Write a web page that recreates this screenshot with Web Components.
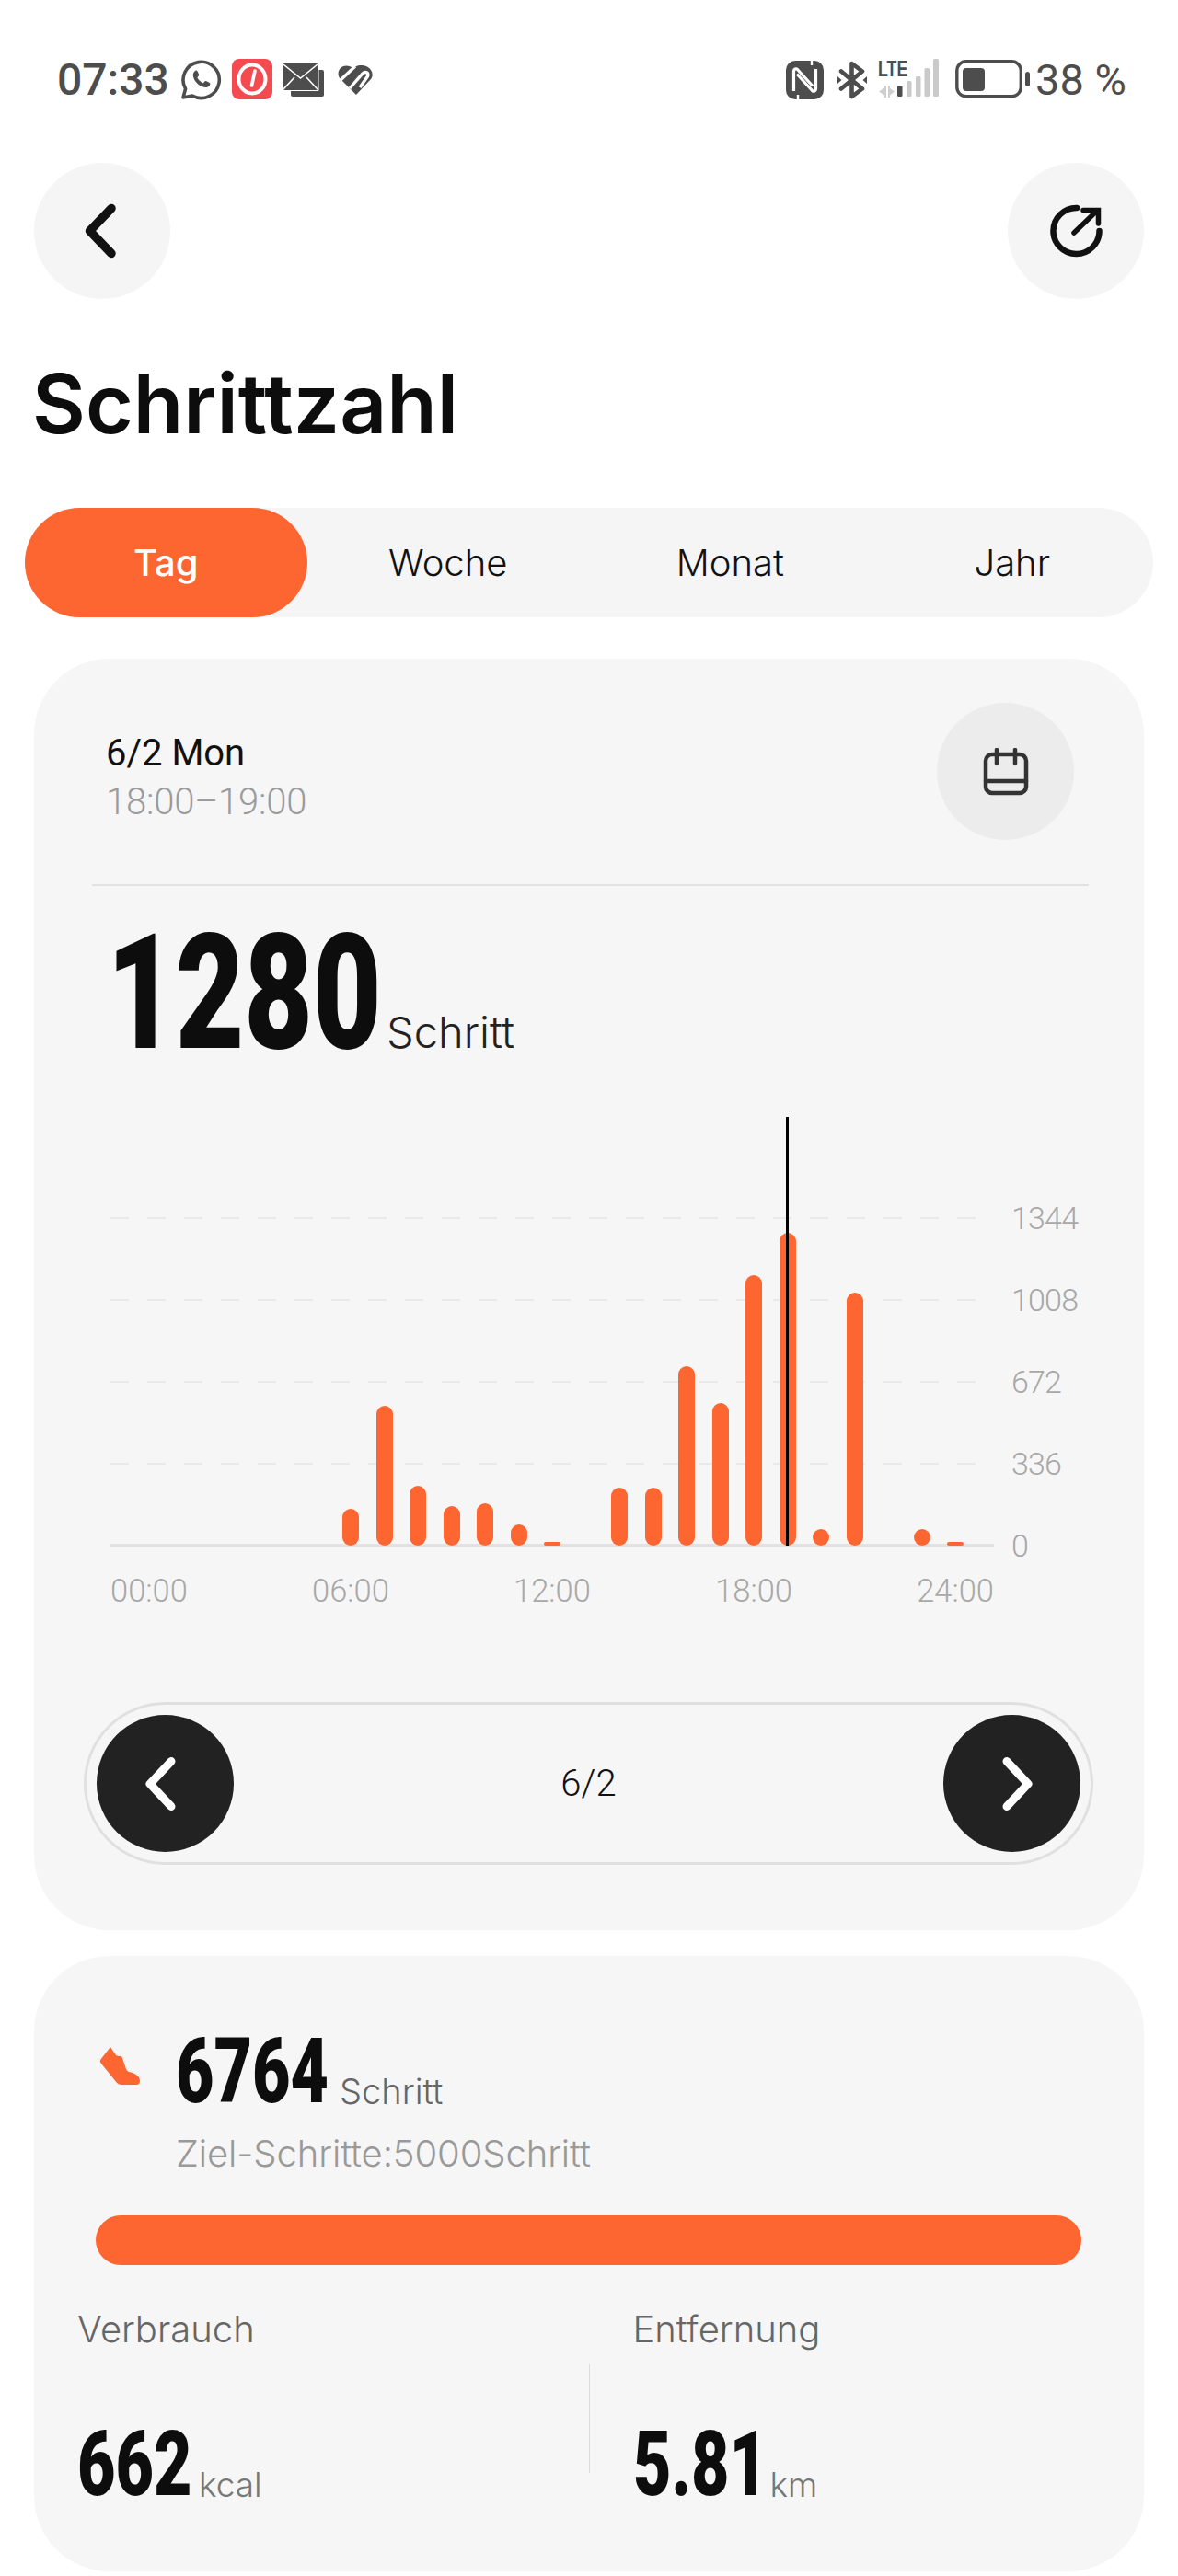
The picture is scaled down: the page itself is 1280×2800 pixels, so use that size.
<!DOCTYPE html>
<html lang="de">
<head>
<meta charset="utf-8">
<title>Schrittzahl</title>
<style>
  html, body { margin: 0; padding: 0; background: #fff; }
  body { width: 1280px; height: 2800px; overflow: hidden; font-family: Inter, "Liberation Sans", sans-serif; }
</style>
</head>
<body>
<step-screen></step-screen>

<script>
const ORANGE = "#fe6631";

// condensed heavy digits: no condensed face is installed, so squeeze the black one
class NumValue extends HTMLElement {
  constructor() {
    super();
    this.attachShadow({ mode: "open" });
    this.shadowRoot.innerHTML = `
      <style>
        :host { display: inline-block; flex: none; width: var(--w); height: var(--h); line-height: var(--h); white-space: nowrap; color: var(--c, #0d0d0d); }
        span {
          display: inline-block;
          font: 900 var(--size)/var(--h) Roboto, "Liberation Sans", sans-serif;
          transform: scaleX(var(--sx, 1));
          transform-origin: 0 50%;
        }
      </style>
      <span><slot></slot></span>`;
  }
}

class StatusBar extends HTMLElement {
  constructor() {
    super();
    this.attachShadow({ mode: "open" });
    this.shadowRoot.innerHTML = `
      <style>
        :host { display: flex; justify-content: space-between; padding: 64px 56px 0 62px; box-sizing: border-box; height: 177px; color: #4d4d4d; }
        .group { display: flex; align-items: flex-start; height: 45px; }
        .txt { font: 500 48px/46px Roboto, sans-serif; }
        .pct { font: 400 47px/46px Roboto, sans-serif; margin-left: 6px; }
        svg { display: block; flex: none; }
        .lte { position: relative; width: 66px; height: 42px; margin-left: 12px; }
        .lte b { position: absolute; left: 0; top: 1px; font: bold 24px/20px "Liberation Sans", sans-serif; transform: scaleX(.74); transform-origin: 0 50%; }
        .lte svg { position: absolute; left: 0; top: 0; }
      </style>
      <div class="group">
        <span class="txt">07:33</span>
        <svg width="45" height="44" viewBox="0 0 45 44" style="margin:1px 0 0 12px" fill="none" stroke="#4d4d4d">
          <path d="M3 41l2.6-9.4A19.6 19.6 0 1 1 13 39z" stroke-width="3.6" stroke-linejoin="round"/>
          <path d="M15.5 12.5c1.5-1.4 2.6-1 3.2.3l1.3 3c.3.8.1 1.4-.4 2l-1.3 1.5c1.4 2.8 3.6 4.8 6.5 6.1l1.6-1.8c.6-.6 1.2-.7 1.9-.4l3 1.5c1.2.6 1.4 1.6.5 3-1.6 2.4-4.6 3-7.9 1.6-4.6-2-8.4-5.800-9.800-10.600-.8-2.700 0-4.900 1.400-6.200z" fill="#4d4d4d" stroke="none"/>
        </svg>
        <svg width="44" height="44" viewBox="0 0 44 44" style="margin:0 0 0 11px">
          <rect width="44" height="44" rx="8" fill="#f54a4f"/>
          <ellipse cx="22" cy="22" rx="14.500" ry="15.500" fill="none" stroke="#fff" stroke-width="4"/>
          <path d="M25 13l-3.500 16" stroke="#fff" stroke-width="3.600" stroke-linecap="round"/>
        </svg>
        <svg width="44" height="38" viewBox="0 0 44 38" style="margin:4px 0 0 12px">
          <rect x="8" y="8" width="36" height="29" rx="2" fill="#4d4d4d"/>
          <rect x="0" y="0" width="38.500" height="31" rx="1.500" fill="#fff"/>
          <rect x="0" y="0" width="37" height="30" rx="1" fill="#4d4d4d"/>
          <path d="M0 2l18.500 15L37 2M0 29l12-13M37 29L25 16" fill="none" stroke="#fff" stroke-width="1.600"/>
        </svg>
        <svg width="38" height="32" viewBox="0 0 38 32" style="margin:7px 0 0 15px">
          <path d="M20 32L3 15C-1 11 0 4 5 1.500 9-.5 13 .5 17 3 21-.5 27-1 32 1.500 38 5 39 11 36 15z" fill="#4d4d4d"/>
          <path d="M2 17L19 1M13 25L27 9c3-3 7-1 5.500 3L24 24" fill="none" stroke="#fff" stroke-width="3.400"/>
        </svg>
      </div>
      <div class="group">
        <svg width="41" height="42" viewBox="0 0 41 42" style="margin-top:2px">
          <rect width="41" height="42" rx="10" fill="#4d4d4d"/>
          <path d="M8.500 33V11.500C8.500 9 11 8 12.500 9.500L29 27.500M32.500 9V30.500C32.500 33 30 34 28.500 32.500L12 14.500" fill="none" stroke="#fff" stroke-width="3.200"/>
          <path d="M28 0V5M13 42V37" stroke="#fff" stroke-width="2.400"/>
        </svg>
        <svg width="32" height="42" viewBox="0 0 32 42" style="margin:2px 0 0 15px">
          <path d="M4 11.500L27 30.500 15.500 39V3L27 11.500 4 30.500" fill="none" stroke="#4d4d4d" stroke-width="4.600" stroke-linejoin="round" stroke-linecap="round"/>
          <path d="M0 17l4.500 4L0 25zM32 17l-4.500 4 4.500 4z" fill="#4d4d4d"/>
        </svg>
        <div class="lte">
          <b>LTE</b>
          <svg width="70" height="42" viewBox="0 0 70 42">
            <path d="M1 35.500l6-4v8zM7 29h2v13H7zM11 29h2v13h-2zM13 32l5 3.500-5 4z" fill="#cfcfcf"/>
            <rect x="21" y="29" width="5.500" height="12" rx="1.500" fill="#4d4d4d"/>
            <rect x="31" y="24" width="5.500" height="17" rx="1.500" fill="#cacaca"/>
            <rect x="41" y="19" width="5.500" height="22" rx="1.500" fill="#cacaca"/>
            <rect x="50.500" y="10" width="5.500" height="31" rx="1.500" fill="#cacaca"/>
            <rect x="60" y="0" width="6" height="41" rx="1.500" fill="#cacaca"/>
          </svg>
        </div>
        <svg width="81" height="42" viewBox="0 0 81 42" style="margin:1px 0 0 18px">
          <rect x="1.800" y="1.800" width="69.500" height="38" rx="10" fill="none" stroke="#4d4d4d" stroke-width="3.400"/>
          <rect x="8" y="9" width="24" height="25" rx="4" fill="#4d4d4d"/>
          <rect x="76" y="13" width="5" height="16" rx="2.500" fill="#4d4d4d"/>
        </svg>
        <span class="pct">38 %</span>
      </div>`;
  }
}

class RoundButton extends HTMLElement {
  constructor() {
    super();
    this.attachShadow({ mode: "open" });
    this.shadowRoot.innerHTML = `
      <style>
        :host { display: flex; align-items: center; justify-content: center; flex: none; width: var(--d, 148px); height: var(--d, 148px); border-radius: 50%; background: var(--bg, #f5f5f5); }
        ::slotted(svg) { display: block; }
      </style>
      <slot></slot>`;
  }
}

class NavBar extends HTMLElement {
  constructor() {
    super();
    this.attachShadow({ mode: "open" });
    this.shadowRoot.innerHTML = `
      <style>
        :host { display: flex; justify-content: space-between; padding: 0 37px; }
        svg { display: block; }
      </style>
      <round-button>
        <svg width="40" height="64" viewBox="0 0 40 64" style="margin-left:-5px" fill="none" stroke="#111" stroke-width="9.500" stroke-linecap="round" stroke-linejoin="round"><path d="M32 7.500L8.500 32 32 56.500"/></svg>
      </round-button>
      <round-button>
        <svg width="64" height="64" viewBox="0 0 64 64" fill="none" stroke="#111" stroke-linecap="round" stroke-linejoin="miter">
          <path d="M33 7A25 25 0 1 0 57.500 32" stroke-width="6.500"/>
          <path d="M30 34L53 12" stroke-width="5.500"/>
          <path d="M40 9.500H56.500V24" stroke-width="5.500"/>
        </svg>
      </round-button>`;
  }
}

class PageTitle extends HTMLElement {
  constructor() {
    super();
    this.attachShadow({ mode: "open" });
    this.shadowRoot.innerHTML = `
      <style>
        :host { display: block; height: 227px; padding: 62px 0 0 35px; box-sizing: border-box; font: 600 89px/104px Inter, "Liberation Sans", sans-serif; color: #0d0d0d; }
      </style>
      <slot></slot>`;
  }
}

class PeriodTabs extends HTMLElement {
  constructor() {
    super();
    this.attachShadow({ mode: "open" });
    const tabs = (this.getAttribute("items") || "").split(",");
    this.shadowRoot.innerHTML = `
      <style>
        :host { display: grid; grid-template-columns: repeat(4, 1fr); width: 1226px; height: 119px; margin-left: 27px; border-radius: 60px; background: #f5f5f5; }
        div { display: flex; align-items: center; justify-content: center; border-radius: 60px; font: 300 40px/1 Inter, "Liberation Sans", sans-serif; color: #111; }
        .on { background: ${ORANGE}; color: #fff; font-weight: 500; }
      </style>
      ${tabs.map((t, i) => `<div class="${i == 0 ? "on" : ""}">${t}</div>`).join("")}`;
  }
}

class StepCard extends HTMLElement {
  constructor() {
    super();
    this.attachShadow({ mode: "open" });
    this.shadowRoot.innerHTML = `
      <style>
        :host { display: block; margin: 0 37px; background: #f6f6f6; border-radius: 82px; box-sizing: border-box; overflow: hidden; }
      </style>
      <slot></slot>`;
  }
}

class CardHead extends HTMLElement {
  constructor() {
    super();
    this.attachShadow({ mode: "open" });
    this.shadowRoot.innerHTML = `
      <style>
        :host { display: block; padding-top: 48px; }
        .row { display: flex; justify-content: space-between; padding: 0 76px 0 78px; height: 149px; }
        .date { font: 400 40px/50px Roboto, sans-serif; color: #111; margin-top: 30px; }
        .time { font: 300 40px/50px Roboto, sans-serif; color: #9b9b9b; margin-top: 3px; letter-spacing: -.2px; }
        hr { margin: 48px 60px 0 63px; border: 0; height: 2px; background: #e2e2e2; }
        round-button { --bg: #ececec; --d: 149px; }
        svg { display: block; }
      </style>
      <div class="row">
        <div>
          <div class="date">6/2 Mon</div>
          <div class="time">18:00–19:00</div>
        </div>
        <round-button>
          <svg width="50" height="52" viewBox="0 0 50 52" fill="none" stroke="#333" stroke-linecap="round">
            <rect x="3" y="7" width="44" height="42" rx="7" stroke-width="4.500"/>
            <path d="M3 36H47" stroke-width="4.500"/>
            <path d="M15 2V17M35 2V17" stroke-width="4.500"/>
          </svg>
        </round-button>
      </div>
      <hr>`;
  }
}

class TotalRow extends HTMLElement {
  constructor() {
    super();
    this.attachShadow({ mode: "open" });
    this.shadowRoot.innerHTML = `
      <style>
        :host { display: flex; align-items: flex-end; height: 251px; padding: 0 0 72px 79px; box-sizing: border-box; }
        num-value { --size: 174px; --h: 125px; --w: 304px; --sx: .74; }
        span { font: 300 47px/46px Inter, sans-serif; color: #222; margin-bottom: -3px; }
      </style>
      <num-value>1280</num-value><span>Schritt</span>`;
  }
}

class StepChart extends HTMLElement {
  constructor() {
    super();
    this.attachShadow({ mode: "open" });
    // top edge of each hour's bar in page px, 1680 = axis
    const tops = { 6: 1640, 7: 1528, 8: 1615, 9: 1637, 10: 1634, 11: 1657, 12: 1676, 14: 1617, 15: 1617, 16: 1485, 17: 1525, 18: 1386, 19: 1340, 20: 1662, 21: 1405, 23: 1662, 24: 1676 };
    let bars = "";
    for (let h = 0; h <= 24; h++) {
      const t = tops[h];
      bars += `<div class="col">${t ? `<i style="height:${1680 - t}px"></i>` : ""}</div>`;
    }
    const grid = [[108.5, "1344"], [198, "1008"], [287, "672"], [376, "336"]];
    this.shadowRoot.innerHTML = `
      <style>
        :host { display: block; height: 636px; padding-left: 83px; }
        .plot { position: relative; width: 960px; height: 466px; }
        .line { position: absolute; left: 0; width: 941px; height: 2px; background: repeating-linear-gradient(90deg, #e9e9e9 0 20px, transparent 20px 40px); }
        .label { position: absolute; left: 979px; font: 300 34px/34px Roboto, sans-serif; letter-spacing: -.8px; color: #a8a8a8; transform: translateY(-17px); }
        .axis { position: absolute; left: 0; right: 0; bottom: -2px; height: 4px; background: #e2e2e4; }
        .bars { position: absolute; left: 24px; bottom: 0; display: flex; align-items: flex-end; }
        .col { width: 36.5px; display: flex; justify-content: center; }
        .col i { display: block; width: 18px; border-radius: 9px; background: ${ORANGE}; }
        .cursor { position: absolute; left: 733.5px; top: 0; bottom: 0; width: 3px; background: #000; }
        .times { display: flex; justify-content: space-between; width: 960px; margin-top: 32px; font: 300 34.500px/34px Roboto, sans-serif; color: #a8a8a8; }
      </style>
      <div class="plot">
        ${grid.map(g => `<div class="line" style="top:${g[0]}px"></div><div class="label" style="top:${g[0] + 1}px">${g[1]}</div>`).join("")}
        <div class="label" style="top:466px">0</div>
        <div class="axis"></div>
        <div class="bars">${bars}</div>
        <div class="cursor"></div>
      </div>
      <div class="times"><span>00:00</span><span>06:00</span><span>12:00</span><span>18:00</span><span>24:00</span></div>`;
  }
}

class DatePager extends HTMLElement {
  constructor() {
    super();
    this.attachShadow({ mode: "open" });
    this.shadowRoot.innerHTML = `
      <style>
        :host { display: flex; align-items: center; justify-content: space-between; height: 177px; margin: 0 55px 0 54px; padding: 0 11px; box-sizing: border-box; border: 3px solid #e0e0e0; border-radius: 89px; }
        round-button { --bg: #222; --d: 149px; }
        span { font: 300 40px/1 Roboto, sans-serif; color: #111; }
        svg { display: block; }
      </style>
      <round-button>
        <svg width="40" height="64" viewBox="0 0 40 64" style="margin-right:10px" fill="none" stroke="#fff" stroke-width="9" stroke-linecap="round" stroke-linejoin="round"><path d="M31 7.500L8 32 31 56.500"/></svg>
      </round-button>
      <span>6/2</span>
      <round-button>
        <svg width="40" height="64" viewBox="0 0 40 64" style="margin-left:10px" fill="none" stroke="#fff" stroke-width="9" stroke-linecap="round" stroke-linejoin="round"><path d="M9 7.500L32 32 9 56.500"/></svg>
      </round-button>`;
  }
}

class StatCell extends HTMLElement {
  constructor() {
    super();
    this.attachShadow({ mode: "open" });
    this.shadowRoot.innerHTML = `
      <style>
        :host { display: block; width: 556px; padding-left: 47px; }
        .name { font: 300 40px/50px Inter, sans-serif; color: #666; height: 137px; }
        .val { display: flex; align-items: flex-end; }
        num-value { --size: 98px; --h: 70px; --w: var(--vw, 132px); --sx: .73; }
        .unit { font: 300 37px/36px Inter, sans-serif; color: #777; margin-bottom: -5px; }
      </style>
      <div class="name">${this.getAttribute("name")}</div>
      <div class="val"><num-value>${this.getAttribute("value")}</num-value><span class="unit">${this.getAttribute("unit")}</span></div>`;
  }
}

class GoalPanel extends HTMLElement {
  constructor() {
    super();
    this.attachShadow({ mode: "open" });
    this.shadowRoot.innerHTML = `
      <style>
        :host { display: block; padding-top: 91px; }
        .top { display: flex; align-items: flex-start; padding-left: 71px; }
        .top svg { display: block; flex: none; margin-top: 8px; }
        .top num-value { --size: 98px; --h: 70px; --w: 178px; --sx: .73; margin-left: 39px; }
        .unit { font: 300 38px/38px Inter, sans-serif; color: #666; align-self: flex-end; margin-bottom: -5px; }
        .goal { margin: 29px 0 0 154px; font: 300 40px/50px Inter, sans-serif; color: #999; white-space: nowrap; letter-spacing: -.1px; }
        .bar { height: 54px; margin: 42px 68px 0 67px; border-radius: 27px; background: ${ORANGE}; }
        .stats { display: flex; margin-top: 45px; }
        .sep { width: 1px; height: 118px; margin-top: 63px; background: #dcdcdc; }
      </style>
      <div class="top">
        <svg width="44" height="41" viewBox="0 0 44 41"><path d="M12 0L1 14Q0 16 2 18L19 39Q21 41 24 41H40Q44 41 44 37 44 31 36 28L32 27Q30 26 29 24L25 12Q24 9 21 10L18 9Z" fill="${ORANGE}"/></svg>
        <num-value>6764</num-value><span class="unit">Schritt</span>
      </div>
      <div class="goal">Ziel-Schritte:5000Schritt</div>
      <div class="bar"></div>
      <div class="stats">
        <stat-cell name="Verbrauch" value="662" unit="kcal"></stat-cell>
        <div class="sep"></div>
        <stat-cell name="Entfernung" value="5.81" unit="km" style="--vw:149px"></stat-cell>
      </div>`;
  }
}

class StepScreen extends HTMLElement {
  constructor() {
    super();
    this.attachShadow({ mode: "open" });
    this.shadowRoot.innerHTML = `
      <style>
        :host { display: block; width: 1280px; height: 2800px; }
        .c1 { height: 1382px; margin-top: 45px; }
        .c2 { height: 669px; margin-top: 28px; }
      </style>
      <status-bar></status-bar>
      <nav-bar></nav-bar>
      <page-title>Schrittzahl</page-title>
      <period-tabs items="Tag,Woche,Monat,Jahr"></period-tabs>
      <step-card class="c1">
        <card-head></card-head>
        <total-row></total-row>
        <step-chart></step-chart>
        <date-pager></date-pager>
      </step-card>
      <step-card class="c2">
        <goal-panel></goal-panel>
      </step-card>`;
  }
}

customElements.define("num-value", NumValue);
customElements.define("round-button", RoundButton);
customElements.define("status-bar", StatusBar);
customElements.define("nav-bar", NavBar);
customElements.define("page-title", PageTitle);
customElements.define("period-tabs", PeriodTabs);
customElements.define("step-card", StepCard);
customElements.define("card-head", CardHead);
customElements.define("total-row", TotalRow);
customElements.define("step-chart", StepChart);
customElements.define("date-pager", DatePager);
customElements.define("stat-cell", StatCell);
customElements.define("goal-panel", GoalPanel);
customElements.define("step-screen", StepScreen);
</script>
</body>
</html>
